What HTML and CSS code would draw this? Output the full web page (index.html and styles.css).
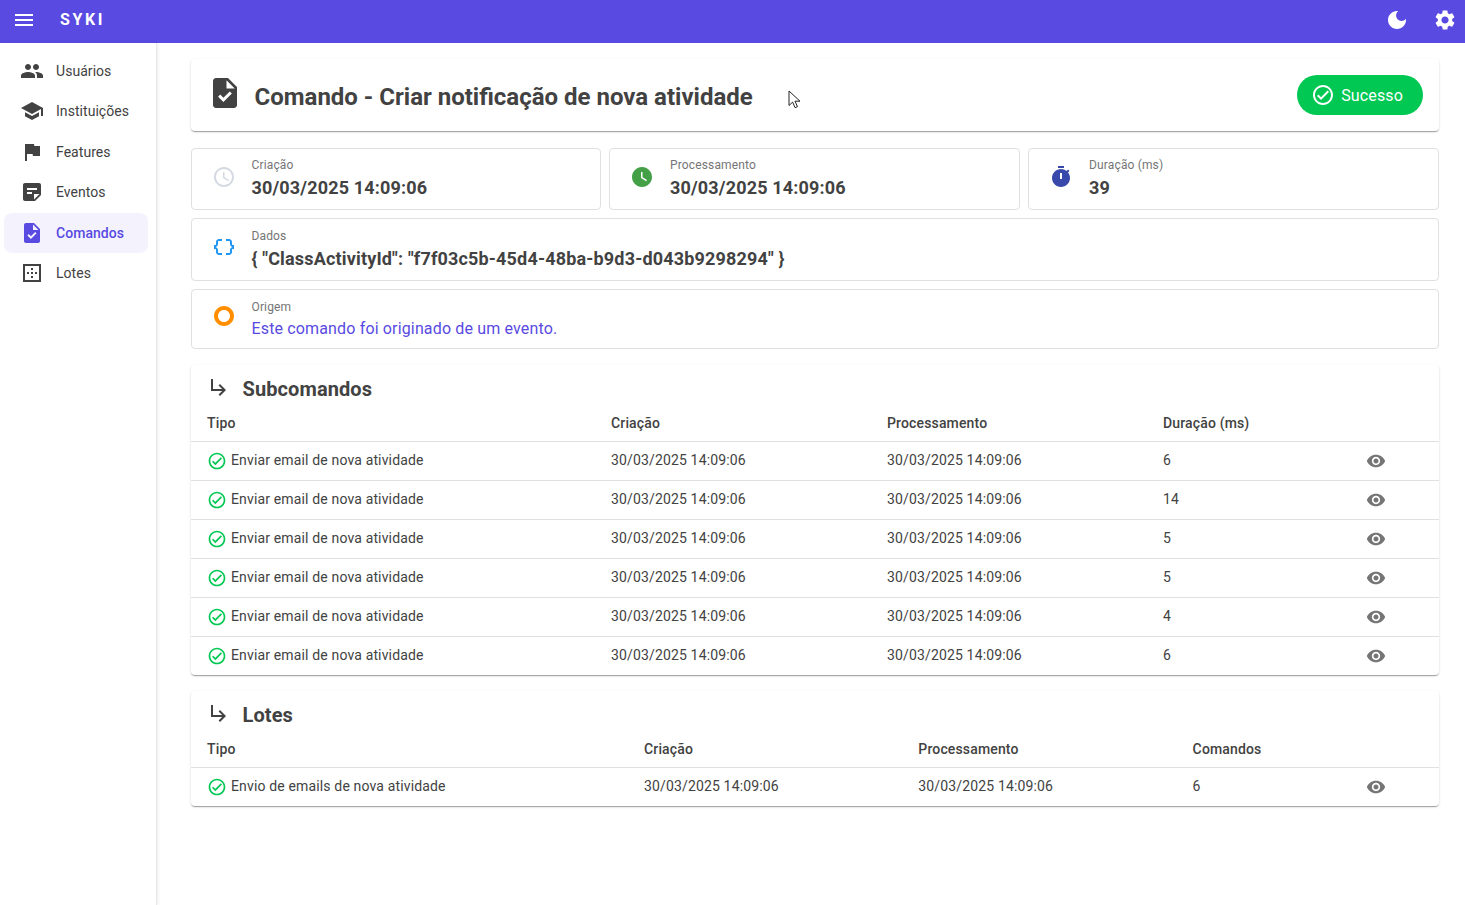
FILE: index.html
```html
<!DOCTYPE html>
<html lang="pt-BR">
<head>
  <title>Syki - Comando</title>
  <meta charset="utf-8">
  <link rel="stylesheet" href="styles.css">
</head>
<body>
  <svg class="sprite" xmlns="http://www.w3.org/2000/svg">
    <symbol id="i-menu" viewBox="0 0 24 24"><path d="M3 18h18v-2H3v2zm0-5h18v-2H3v2zm0-7v2h18V6H3z"/></symbol>
    <symbol id="i-moon" viewBox="0 0 24 24"><path d="M12 3c-4.97 0-9 4.03-9 9s4.03 9 9 9 9-4.03 9-9c0-.46-.04-.92-.1-1.36-.98 1.37-2.58 2.26-4.4 2.26-2.98 0-5.4-2.42-5.4-5.4 0-1.81.89-3.42 2.26-4.4-.44-.06-.9-.1-1.36-.1z"/></symbol>
    <symbol id="i-gear" viewBox="0 0 24 24"><path d="M19.14 12.94c.04-.3.06-.61.06-.94 0-.32-.02-.64-.07-.94l2.03-1.58c.18-.14.23-.41.12-.61l-1.92-3.32c-.12-.22-.37-.29-.59-.22l-2.39.96c-.5-.38-1.03-.7-1.62-.94l-.36-2.54c-.04-.24-.24-.41-.48-.41h-3.84c-.24 0-.43.17-.47.41l-.36 2.54c-.59.24-1.13.57-1.62.94l-2.39-.96c-.22-.08-.47 0-.59.22L2.74 8.87c-.12.21-.08.47.12.61l2.03 1.58c-.05.3-.09.63-.09.94s.02.64.07.94l-2.03 1.58c-.18.14-.23.41-.12.61l1.92 3.32c.12.22.37.29.59.22l2.39-.96c.5.38 1.03.7 1.62.94l.36 2.54c.05.24.24.41.48.41h3.84c.24 0 .44-.17.47-.41l.36-2.54c.59-.24 1.13-.56 1.62-.94l2.39.96c.22.08.47 0 .59-.22l1.92-3.32c.12-.22.07-.47-.12-.61l-2.01-1.58zM12 15.6c-1.98 0-3.6-1.62-3.6-3.6s1.62-3.6 3.6-3.6 3.6 1.62 3.6 3.6-1.62 3.6-3.6 3.6z"/></symbol>
    <symbol id="i-people" viewBox="0 0 24 24"><path d="M16 11c1.66 0 2.99-1.34 2.99-3S17.66 5 16 5c-1.66 0-3 1.34-3 3s1.34 3 3 3zm-8 0c1.66 0 2.99-1.34 2.99-3S9.66 5 8 5C6.34 5 5 6.34 5 8s1.34 3 3 3zm0 2c-2.33 0-7 1.17-7 3.5V19h14v-2.5c0-2.33-4.67-3.5-7-3.5zm8 0c-.29 0-.62.02-.97.05 1.16.84 1.97 1.97 1.97 3.45V19h6v-2.5c0-2.33-4.67-3.5-7-3.5z"/></symbol>
    <symbol id="i-school" viewBox="0 0 24 24"><path d="M5 13.18v4L12 21l7-3.82v-4L12 17l-7-3.82zM12 3L1 9l11 6 9-4.91V17h2V9L12 3z"/></symbol>
    <symbol id="i-flag" viewBox="0 0 24 24"><path d="M14.4 6L14 4H5v17h2v-7h5.6l.4 2h7V6z"/></symbol>
    <symbol id="i-note" viewBox="0 0 24 24"><path d="M19 3H4.99C3.89 3 3 3.9 3 5l.01 14c0 1.1.89 2 1.99 2h10l6-6V5c0-1.1-.9-2-2-2zM7 8h10v2H7V8zm5 6H7v-2h5v2zm2 5.5V14h5.5L14 19.5z"/></symbol>
    <symbol id="i-task" viewBox="0 0 24 24"><path d="M14 2H6c-1.1 0-1.99.9-1.99 2L4 20c0 1.1.89 2 1.99 2H18c1.1 0 2-.9 2-2V8l-6-6zm-3.06 16L7.4 14.46l1.41-1.41 2.12 2.12 4.24-4.24 1.41 1.41L10.94 18zM13 9V3.5L18.5 9H13z"/></symbol>
    <symbol id="i-border" viewBox="0 0 24 24"><path d="M13 7h-2v2h2V7zm0 4h-2v2h2v-2zm4 0h-2v2h2v-2zM3 3v18h18V3H3zm16 16H5V5h14v14zm-6-4h-2v2h2v-2zm-4-4H7v2h2v-2z"/></symbol>
    <symbol id="i-check" viewBox="0 0 24 24"><path d="M12 2C6.48 2 2 6.48 2 12s4.48 10 10 10 10-4.48 10-10S17.52 2 12 2zm0 18c-4.41 0-8-3.59-8-8s3.59-8 8-8 8 3.59 8 8-3.59 8-8 8zm4.59-12.42L10 14.17l-2.59-2.58L6 13l4 4 8-8z"/></symbol>
    <symbol id="i-clock" viewBox="0 0 24 24"><path d="M11.99 2C6.47 2 2 6.48 2 12s4.47 10 9.99 10C17.52 22 22 17.52 22 12S17.52 2 11.99 2zM12 20c-4.42 0-8-3.58-8-8s3.58-8 8-8 8 3.58 8 8-3.58 8-8 8zm.5-13H11v6l5.25 3.15.75-1.23-4.5-2.67z"/></symbol>
    <symbol id="i-clock-fill" viewBox="0 0 24 24"><path d="M12 2C6.5 2 2 6.5 2 12s4.5 10 10 10 10-4.5 10-10S17.5 2 12 2zm4.2 14.2L11 13V7h1.5v5.2l4.5 2.7-.8 1.3z"/></symbol>
    <symbol id="i-timer" viewBox="0 0 24 24"><path fill-rule="evenodd" d="M15 1H9v2h6V1zm-4 13h2V8h-2v6zm8.03-6.61l1.42-1.42c-.43-.51-.9-.99-1.41-1.41l-1.42 1.42C16.07 4.74 14.12 4 12 4c-4.97 0-9 4.03-9 9s4.02 9 9 9 9-4.03 9-9c0-2.12-.74-4.07-1.97-5.61z"/></symbol>
    <symbol id="i-data" viewBox="0 0 24 24"><path d="M4 7v2c0 .55-.45 1-1 1H2v4h1c.55 0 1 .45 1 1v2c0 1.65 1.35 3 3 3h3v-2H7c-.55 0-1-.45-1-1v-2c0-1.3-.84-2.42-2-2.83v-.34C5.16 11.42 6 10.3 6 9V7c0-.55.45-1 1-1h3V4H7C5.35 4 4 5.35 4 7zm17 3c-.55 0-1-.45-1-1V7c0-1.65-1.35-3-3-3h-3v2h3c.55 0 1 .45 1 1v2c0 1.3.84 2.42 2 2.83v.34c-1.16.41-2 1.52-2 2.83v2c0 .55-.45 1-1 1h-3v2h3c1.65 0 3-1.35 3-3v-2c0-.55.45-1 1-1h1v-4h-1z"/></symbol>
    <symbol id="i-origin" viewBox="0 0 24 24"><path d="M2 12C2 6.48 6.48 2 12 2s10 4.48 10 10-4.48 10-10 10S2 17.52 2 12zm10 6c3.31 0 6-2.69 6-6s-2.69-6-6-6-6 2.69-6 6 2.69 6 6 6z"/></symbol>
    <symbol id="i-sub" viewBox="0 0 24 24"><path d="M19 15l-6 6-1.42-1.42L15.17 16H4V4h2v10h9.17l-3.59-3.58L13 9l6 6z"/></symbol>
    <symbol id="i-eye" viewBox="0 0 24 24"><path d="M12 4.5C7 4.5 2.73 7.61 1 12c1.73 4.39 6 7.5 11 7.5s9.27-3.11 11-7.5c-1.73-4.39-6-7.5-11-7.5zM12 17c-2.76 0-5-2.24-5-5s2.24-5 5-5 5 2.24 5 5-2.24 5-5 5zm0-8c-1.66 0-3 1.34-3 3s1.34 3 3 3 3-1.34 3-3-1.34-3-3-3z"/></symbol>
  </svg>

  <header class="appbar">
    <svg class="icon menu-btn"><use href="#i-menu"/></svg>
    <span class="brand">SYKI</span>
    <svg class="icon moon-btn"><use href="#i-moon"/></svg>
    <svg class="icon gear-btn"><use href="#i-gear"/></svg>
  </header>

  <div class="shell">
    <nav class="drawer">
      <a class="nav-item"><svg class="icon"><use href="#i-people"/></svg>Usuários</a>
      <a class="nav-item"><svg class="icon"><use href="#i-school"/></svg>Instituições</a>
      <a class="nav-item"><svg class="icon"><use href="#i-flag"/></svg>Features</a>
      <a class="nav-item"><svg class="icon"><use href="#i-note"/></svg>Eventos</a>
      <a class="nav-item active"><svg class="icon"><use href="#i-task"/></svg>Comandos</a>
      <a class="nav-item"><svg class="icon"><use href="#i-border"/></svg>Lotes</a>
    </nav>

    <main class="content">
      <section class="paper title-card">
        <svg class="icon title-icon"><use href="#i-task"/></svg>
        <h1>Comando - Criar notificação de nova atividade</h1>
        <span class="chip"><svg class="icon"><use href="#i-check"/></svg>Sucesso</span>
      </section>

      <div class="stats">
        <div class="outlined stat">
          <svg class="icon c-grey"><use href="#i-clock"/></svg>
          <div><p class="label">Criação</p><p class="value">30/03/2025 14:09:06</p></div>
        </div>
        <div class="outlined stat">
          <svg class="icon c-green"><use href="#i-clock-fill"/></svg>
          <div><p class="label">Processamento</p><p class="value">30/03/2025 14:09:06</p></div>
        </div>
        <div class="outlined stat">
          <svg class="icon c-indigo"><use href="#i-timer"/></svg>
          <div><p class="label">Duração (ms)</p><p class="value">39</p></div>
        </div>
      </div>

      <div class="outlined stat stat-data">
        <svg class="icon c-blue"><use href="#i-data"/></svg>
        <div><p class="label">Dados</p><p class="value">{ "ClassActivityId": "f7f03c5b-45d4-48ba-b9d3-d043b9298294" }</p></div>
      </div>

      <div class="outlined stat stat-origin">
        <svg class="icon c-orange"><use href="#i-origin"/></svg>
        <div><p class="label">Origem</p><a class="origin-link">Este comando foi originado de um evento.</a></div>
      </div>

      <section class="paper list-card">
        <h2><svg class="icon"><use href="#i-sub"/></svg>Subcomandos</h2>
        <table class="cmd-table">
          <thead>
            <tr><th>Tipo</th><th>Criação</th><th>Processamento</th><th>Duração (ms)</th><th></th></tr>
          </thead>
          <tbody>
            <tr><td><span class="tipo"><svg class="icon"><use href="#i-check"/></svg>Enviar email de nova atividade</span></td><td>30/03/2025 14:09:06</td><td>30/03/2025 14:09:06</td><td>6</td><td class="eye"><svg class="icon"><use href="#i-eye"/></svg></td></tr>
            <tr><td><span class="tipo"><svg class="icon"><use href="#i-check"/></svg>Enviar email de nova atividade</span></td><td>30/03/2025 14:09:06</td><td>30/03/2025 14:09:06</td><td>14</td><td class="eye"><svg class="icon"><use href="#i-eye"/></svg></td></tr>
            <tr><td><span class="tipo"><svg class="icon"><use href="#i-check"/></svg>Enviar email de nova atividade</span></td><td>30/03/2025 14:09:06</td><td>30/03/2025 14:09:06</td><td>5</td><td class="eye"><svg class="icon"><use href="#i-eye"/></svg></td></tr>
            <tr><td><span class="tipo"><svg class="icon"><use href="#i-check"/></svg>Enviar email de nova atividade</span></td><td>30/03/2025 14:09:06</td><td>30/03/2025 14:09:06</td><td>5</td><td class="eye"><svg class="icon"><use href="#i-eye"/></svg></td></tr>
            <tr><td><span class="tipo"><svg class="icon"><use href="#i-check"/></svg>Enviar email de nova atividade</span></td><td>30/03/2025 14:09:06</td><td>30/03/2025 14:09:06</td><td>4</td><td class="eye"><svg class="icon"><use href="#i-eye"/></svg></td></tr>
            <tr><td><span class="tipo"><svg class="icon"><use href="#i-check"/></svg>Enviar email de nova atividade</span></td><td>30/03/2025 14:09:06</td><td>30/03/2025 14:09:06</td><td>6</td><td class="eye"><svg class="icon"><use href="#i-eye"/></svg></td></tr>
          </tbody>
        </table>
      </section>

      <section class="paper list-card">
        <h2><svg class="icon"><use href="#i-sub"/></svg>Lotes</h2>
        <table class="batch-table">
          <thead>
            <tr><th>Tipo</th><th>Criação</th><th>Processamento</th><th>Comandos</th><th></th></tr>
          </thead>
          <tbody>
            <tr><td><span class="tipo"><svg class="icon"><use href="#i-check"/></svg>Envio de emails de nova atividade</span></td><td>30/03/2025 14:09:06</td><td>30/03/2025 14:09:06</td><td>6</td><td class="eye"><svg class="icon"><use href="#i-eye"/></svg></td></tr>
          </tbody>
        </table>
      </section>
    </main>
  </div>

  <svg class="cursor" viewBox="0 0 14 19"><path d="M1 1v14.5l3.6-3.4 2.5 5.6 2.4-1-2.5-5.5h5z"/></svg>
</body>
</html>
```

FILE: styles.css
```css
* {
    box-sizing: border-box;
}

html, body {
    height: 100%;
}

body {
    margin: 0;
    font-family: Roboto, "Liberation Sans", sans-serif;
    font-size: 14px;
    color: #424242;
    background: #fff;
    overflow: hidden;
}

p {
    margin: 0;
}

.sprite {
    display: none;
}

.icon {
    width: 24px;
    height: 24px;
    fill: currentColor;
    flex: none;
    display: block;
}

.appbar {
    height: 43px;
    background: #594ae2;
    color: #fff;
    display: flex;
    align-items: center;
    padding: 0 8px 0 12px;
}

.menu-btn {
    margin-top: -4px;
}

.brand {
    margin: -5px 0 0 24px;
    font-size: 16px;
    font-weight: 700;
    letter-spacing: 2.6px;
}

.moon-btn {
    margin: -4px 0 0 auto;
}

.gear-btn {
    margin: -4px 0 0 24px;
}

.shell {
    display: flex;
    height: 862px;
}

.drawer {
    width: 157px;
    flex: none;
    padding: 7.6px 8px 0 4px;
    border-right: 1px solid #e8e8e8;
    box-shadow: 1px 0 3px rgba(0, 0, 0, 0.08);
}

.nav-item {
    display: flex;
    align-items: center;
    gap: 12px;
    height: 40.5px;
    padding-left: 16px;
    border-radius: 8px;
    color: #424242;
    letter-spacing: 0.05px;
}

.nav-item.active {
    background: #f4f3fd;
    color: #594ae2;
    font-weight: 500;
}

.content {
    flex: 1;
    padding: 16px 26px 0 34px;
    min-width: 0;
}

.paper {
    background: #fff;
    border-radius: 4px;
    box-shadow: 0 2px 1px -1px rgba(0, 0, 0, 0.2), 0 1px 1px 0 rgba(0, 0, 0, 0.14), 0 1px 3px 0 rgba(0, 0, 0, 0.12);
}

.outlined {
    background: #fff;
    border: 1px solid #e0e0e0;
    border-radius: 4px;
}

.title-card {
    height: 72px;
    display: flex;
    align-items: center;
    padding: 0 16px;
    margin-bottom: 17px;
}

.title-icon {
    width: 36px;
    height: 36px;
    margin-top: -4px;
}

h1 {
    margin: 4px 0 0 11.5px;
    font-size: 24px;
    font-weight: 700;
    line-height: 1;
}

.chip {
    margin-left: auto;
    height: 40px;
    padding: 0 20px 0 14px;
    border-radius: 20px;
    background: #00c853;
    color: #fff;
    display: flex;
    align-items: center;
    gap: 6px;
    font-size: 16px;
    letter-spacing: 0.15px;
}

.stats {
    display: grid;
    grid-template-columns: 410px 411px 1fr;
    gap: 8px;
    margin-bottom: 8px;
}

.stat {
    height: 62px;
    display: flex;
    align-items: center;
    gap: 15.5px;
    padding-left: 20px;
}

.stat + .stat {
    gap: 16px;
}

.stat > .icon {
    margin-top: -5px;
}

.stat-data {
    height: 63px;
    margin-bottom: 8px;
}

.stat-data > .icon,
.stat-origin > .icon {
    margin-top: -6px;
}

.stat-origin {
    height: 60px;
    margin-bottom: 16px;
}

.stat-origin > div {
    margin-top: 2px;
}

.stat-data + .stat-origin {
    gap: 15.5px;
}

.label {
    font-size: 12px;
    line-height: 16px;
    color: #757575;
    letter-spacing: 0.15px;
}

.value {
    font-size: 18px;
    font-weight: 700;
    line-height: 26px;
    margin-top: 2px;
    letter-spacing: 0.17px;
}

.origin-link {
    display: block;
    font-size: 16px;
    line-height: 24px;
    margin-top: 2px;
    color: #594ae2;
    letter-spacing: 0.15px;
}

.c-grey { color: #d5d9e2; }
.c-green { color: #43a047; }
.c-indigo { color: #3949ab; }
.c-blue { color: #2196f3; }
.c-orange { color: #ff8f00; }

.list-card {
    margin-bottom: 16px;
}

h2 {
    margin: 0;
    height: 39px;
    display: flex;
    align-items: flex-end;
    gap: 11.5px;
    padding: 0 0 3px 16px;
    font-size: 20px;
    font-weight: 700;
    line-height: 24px;
    letter-spacing: 0.1px;
}

h2 .icon {
    margin-bottom: 2px;
}

table {
    width: 100%;
    border-collapse: collapse;
    table-layout: fixed;
}

th, td {
    padding: 0 16px;
    text-align: left;
    font-size: 14px;
    letter-spacing: 0.15px;
    border-bottom: 1px solid #e0e0e0;
}

th {
    height: 37px;
    padding-top: 2px;
    font-weight: 500;
}

td {
    height: 39px;
    padding-bottom: 2px;
}

tbody tr:last-child td {
    border-bottom: 0;
}

.cmd-table th:nth-child(1) { width: 404px; }
.cmd-table th:nth-child(2),
.cmd-table th:nth-child(3) { width: 276px; }
.cmd-table th:nth-child(4) { width: 176px; }

.batch-table th:nth-child(1) { width: 437px; }
.batch-table th:nth-child(2),
.batch-table th:nth-child(3) { width: 274.3px; }
.batch-table th:nth-child(4) { width: 146px; }

.tipo {
    display: flex;
    align-items: center;
    gap: 4px;
}

.tipo .icon {
    width: 20px;
    height: 20px;
    color: #00c853;
    margin-top: 2px;
}

.eye {
    padding: 0;
}

.eye .icon {
    width: 20px;
    height: 20px;
    color: #757575;
    margin-left: auto;
    margin-right: 53px;
    margin-top: 1px;
}

.cursor {
    position: absolute;
    left: 788px;
    top: 90px;
    width: 14px;
    height: 19px;
    fill: #fff;
    stroke: #222;
    stroke-width: 1;
}
```
